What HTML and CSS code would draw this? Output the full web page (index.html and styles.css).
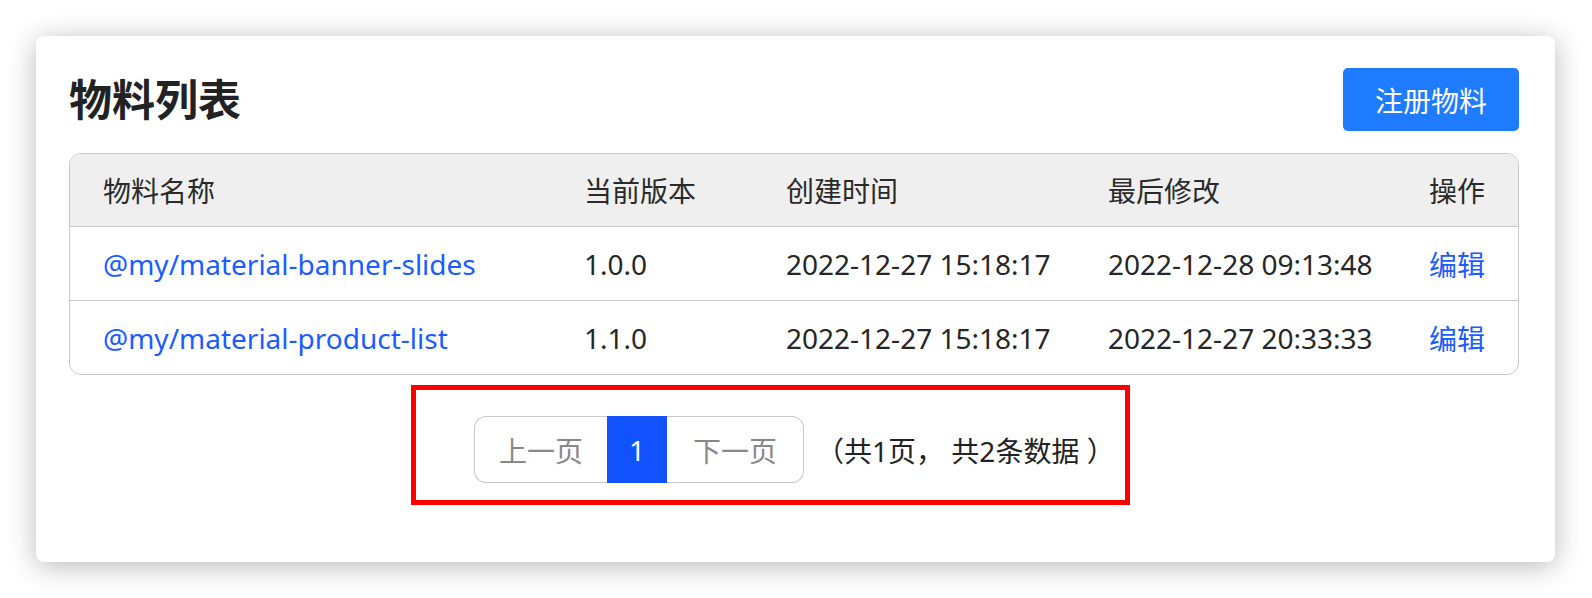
FILE: index.html
```html
<!DOCTYPE html>
<html lang="zh-CN">
<head>
<meta charset="utf-8">
<title>物料列表</title>
<link rel="stylesheet" href="styles.css">
</head>
<body>
<div class="card">
  <div class="card-head">
    <h1 class="title">物料列表</h1>
    <button class="btn-primary">注册物料</button>
  </div>
  <div class="table-wrap">
    <table class="table">
      <colgroup>
        <col class="c1"><col class="c2"><col class="c3"><col class="c4"><col class="c5">
      </colgroup>
      <thead>
        <tr><th>物料名称</th><th>当前版本</th><th>创建时间</th><th>最后修改</th><th>操作</th></tr>
      </thead>
      <tbody>
        <tr>
          <td><a class="link" href="#">@my/material-banner-slides</a></td>
          <td>1.0.0</td>
          <td>2022-12-27 15:18:17</td>
          <td>2022-12-28 09:13:48</td>
          <td><a class="link" href="#">编辑</a></td>
        </tr>
        <tr>
          <td><a class="link" href="#">@my/material-product-list</a></td>
          <td>1.1.0</td>
          <td>2022-12-27 15:18:17</td>
          <td>2022-12-27 20:33:33</td>
          <td><a class="link" href="#">编辑</a></td>
        </tr>
      </tbody>
    </table>
  </div>
  <div class="pager-row">
    <div class="highlight">
      <div class="pager">
        <span class="page-btn prev">上一页</span>
        <span class="page-btn active">1</span>
        <span class="page-btn next">下一页</span>
      </div>
      <span class="pager-info">（共1页， 共2条数据 ）</span>
    </div>
  </div>
</div>
</body>
</html>
```

FILE: styles.css
```css
html, body {
  margin: 0;
  background: #fff;
}
body {
  font-family: "Noto Sans", "Noto Sans CJK SC", sans-serif;
  color: #262626;
  padding: 36px 37px 37px 36px;
}
.card {
  background: #fff;
  border-radius: 8px;
  box-shadow: 0 4px 28px rgba(0, 0, 0, 0.28);
  padding: 32px 36px 57px 33px;
}
.card-head {
  display: flex;
  justify-content: space-between;
  align-items: center;
}
.title {
  margin: 0;
  font-size: 43px;
  font-weight: 700;
  color: #222;
  line-height: 63px;
}
.btn-primary {
  height: 63px;
  padding: 0 32px;
  background: #1f7bff;
  color: #fff;
  border: none;
  border-radius: 5px;
  font-size: 28px;
  font-family: inherit;
}
.table-wrap {
  margin-top: 22px;
  border: 1.5px solid #c8c8c8;
  border-radius: 12px;
  overflow: hidden;
}
.table {
  width: 100%;
  border-collapse: collapse;
  table-layout: fixed;
  font-size: 28px;
}
.c1 { width: 481px; }
.c2 { width: 202px; }
.c3 { width: 322px; }
.c4 { width: 321px; }
.table th,
.table td {
  padding: 0 33px;
  text-align: left;
  font-weight: 400;
  white-space: nowrap;
  height: 73px;
}
.table thead th {
  background: #efefef;
  color: #2a2a2a;
  height: 72px;
}
.table tbody td {
  border-top: 1.5px solid #c8c8c8;
}
.link {
  color: #1a5cff;
  text-decoration: none;
}
.pager-row {
  display: flex;
  margin-top: 10px;
  padding-left: 342px;
}
.highlight {
  display: flex;
  align-items: center;
  border: 5px solid #ff0000;
  padding: 26px 10px 17px 58px;
}
.pager {
  display: flex;
  height: 67px;
}
.page-btn {
  display: flex;
  align-items: center;
  padding: 0 24px;
  color: #888;
  font-size: 28px;
  border: 1.5px solid #c8c8c8;
}
.page-btn.prev {
  border-right: none;
  border-radius: 12px 0 0 12px;
}
.page-btn.next {
  border-left: none;
  border-radius: 0 12px 12px 0;
  padding: 0 26px;
}
.page-btn.active {
  background: #1252ff;
  color: #fff;
  border: none;
  padding: 0 22px;
}
.pager-info {
  margin-left: 12px;
  font-size: 28px;
  color: #222;
}
```
